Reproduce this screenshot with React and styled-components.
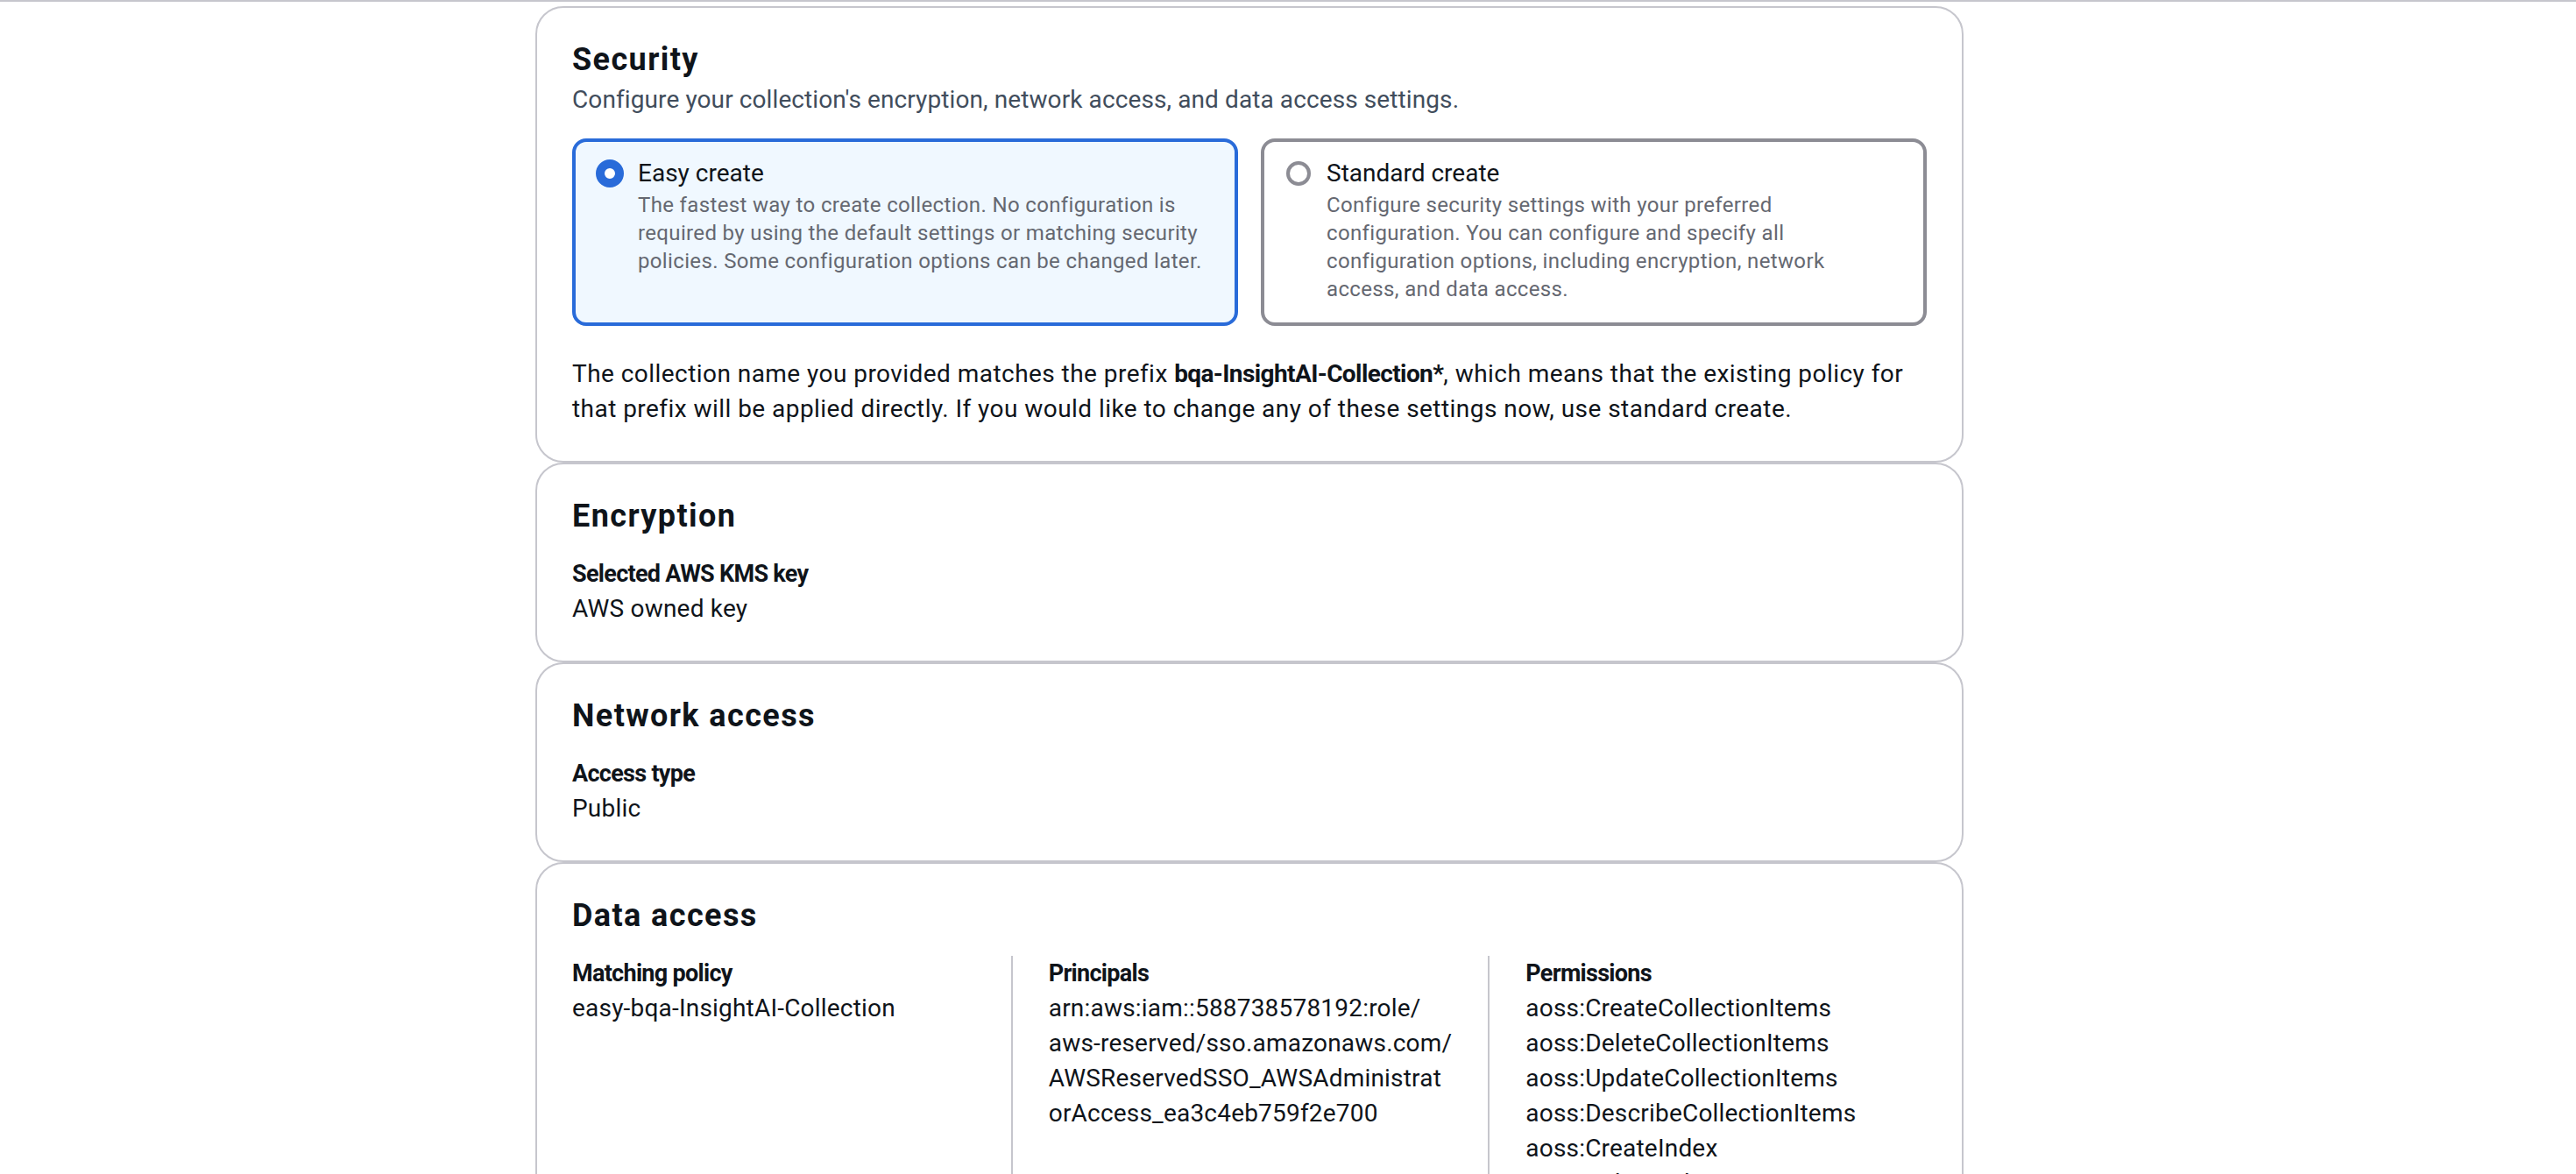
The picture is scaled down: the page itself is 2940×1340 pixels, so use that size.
import React from 'react';
import styled, { createGlobalStyle } from 'styled-components';

const GlobalStyle = createGlobalStyle`
    body {
        margin: 0;
        background: #ffffff;
        font-family: Roboto, "Liberation Sans", sans-serif;
        color: #0f141a;
    }
    b {
        letter-spacing: -0.6px;
    }
`;

const TopRule = styled.div`
    height: 2px;
    background: #c6c6cd;
`;

const Page = styled.main`
    padding: 5px 699px 0 611px;
`;

const Stack = styled.div`
    display: flex;
    flex-direction: column;
`;

const Panel = styled.section`
    border: 2px solid #c6c6cd;
    border-radius: 32px;
    padding: 37px 40px 39px;
    background: #ffffff;
`;

const Heading = styled.h2`
    margin: 0;
    font-size: 36px;
    line-height: 44px;
    font-weight: 700;
    letter-spacing: 1.4px;
`;

const Description = styled.p`
    margin: 4px 0 0;
    font-size: 28px;
    line-height: 40px;
    letter-spacing: 0.1px;
    color: #414d5c;
`;

const Body = styled.div`
    margin-top: 24px;
`;

const Tiles = styled.div`
    display: grid;
    grid-template-columns: 1fr 1fr;
    gap: 26px;
`;

const Tile = styled.label`
    display: flex;
    gap: 16px;
    padding: 16px 23px 22px;
    border: 4px solid ${p => (p.$selected ? '#296bd9' : '#8c8c94')};
    border-radius: 16px;
    background: ${p => (p.$selected ? '#f0f8ff' : '#ffffff')};
`;

const Radio = styled.span`
    flex: none;
    box-sizing: border-box;
    width: ${p => (p.$checked ? '32px' : '28px')};
    height: ${p => (p.$checked ? '32px' : '28px')};
    margin: ${p => (p.$checked ? '4px 0 0' : '6px 2px 0')};
    border-radius: 50%;
    border: ${p => (p.$checked ? '10px solid #296bd9' : '4px solid #8c8c94')};
    background: #ffffff;
`;

const TileText = styled.div`
    display: flex;
    flex-direction: column;
`;

const TileLabel = styled.span`
    font-size: 28px;
    line-height: 40px;
`;

const TileHint = styled.span`
    font-size: 24px;
    line-height: 32px;
    letter-spacing: 0.35px;
    color: #656871;
`;

const Paragraph = styled.p`
    margin: 35px 0 0;
    font-size: 28px;
    line-height: 40px;
    letter-spacing: 0.45px;
`;

const Key = styled.div`
    font-size: 27px;
    line-height: 40px;
    font-weight: 700;
    letter-spacing: -0.7px;
`;

const Value = styled.div`
    font-size: 28px;
    line-height: 40px;
    letter-spacing: 0.2px;
    white-space: nowrap;
`;

const Columns = styled.div`
    display: grid;
    grid-template-columns: repeat(3, 1fr);
    margin: 0 -41px;
`;

const Column = styled.div`
    padding: 0 41px;
    border-left: ${p => (p.$divided ? '2px solid #c6c6cd' : 'none')};
    min-height: 600px;
`;

const permissions = [
    'aoss:CreateCollectionItems',
    'aoss:DeleteCollectionItems',
    'aoss:UpdateCollectionItems',
    'aoss:DescribeCollectionItems',
    'aoss:CreateIndex',
    'aoss:DeleteIndex',
    'aoss:UpdateIndex',
    'aoss:DescribeIndex',
    'aoss:ReadDocument',
    'aoss:WriteDocument',
];

const App = () => {
    return (
        <>
            <GlobalStyle />
            <TopRule />
            <Page>
                <Stack>
                    <Panel>
                        <Heading>Security</Heading>
                        <Description>
                            Configure your collection's encryption, network access, and data access settings.
                        </Description>
                        <Body>
                            <Tiles>
                                <Tile $selected>
                                    <Radio $checked />
                                    <TileText>
                                        <TileLabel>Easy create</TileLabel>
                                        <TileHint>
                                            The fastest way to create collection. No configuration is<br />
                                            required by using the default settings or matching security<br />
                                            policies. Some configuration options can be changed later.
                                        </TileHint>
                                    </TileText>
                                </Tile>
                                <Tile>
                                    <Radio />
                                    <TileText>
                                        <TileLabel>Standard create</TileLabel>
                                        <TileHint>
                                            Configure security settings with your preferred<br />
                                            configuration. You can configure and specify all<br />
                                            configuration options, including encryption, network<br />
                                            access, and data access.
                                        </TileHint>
                                    </TileText>
                                </Tile>
                            </Tiles>
                            <Paragraph>
                                The collection name you provided matches the prefix <b>bqa-InsightAI-Collection*</b>, which means that the existing policy for<br />
                                that prefix will be applied directly. If you would like to change any of these settings now, use standard create.
                            </Paragraph>
                        </Body>
                    </Panel>

                    <Panel>
                        <Heading>Encryption</Heading>
                        <Body>
                            <Key>Selected AWS KMS key</Key>
                            <Value>AWS owned key</Value>
                        </Body>
                    </Panel>

                    <Panel>
                        <Heading>Network access</Heading>
                        <Body>
                            <Key>Access type</Key>
                            <Value>Public</Value>
                        </Body>
                    </Panel>

                    <Panel>
                        <Heading>Data access</Heading>
                        <Body>
                            <Columns>
                                <Column>
                                    <Key>Matching policy</Key>
                                    <Value>easy-bqa-InsightAI-Collection</Value>
                                </Column>
                                <Column $divided>
                                    <Key>Principals</Key>
                                    <Value>arn:aws:iam::588738578192:role/</Value>
                                    <Value>aws-reserved/sso.amazonaws.com/</Value>
                                    <Value>AWSReservedSSO_AWSAdministrat</Value>
                                    <Value>orAccess_ea3c4eb759f2e700</Value>
                                </Column>
                                <Column $divided>
                                    <Key>Permissions</Key>
                                    {permissions.map(p => (
                                        <Value key={p}>{p}</Value>
                                    ))}
                                </Column>
                            </Columns>
                        </Body>
                    </Panel>
                </Stack>
            </Page>
        </>
    );
};

export default App;
